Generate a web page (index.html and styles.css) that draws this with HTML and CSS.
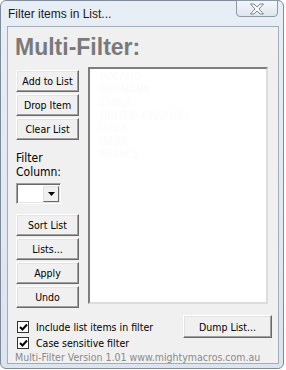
FILE: index.html
```html
<!DOCTYPE html>
<html lang="en">
<head>
  <meta charset="UTF-8">
  <title>Filter items in List...</title>
  <link rel="stylesheet" href="styles.css">
</head>
<body>

<!-- Dialog window -->
<div class="window">
  <div class="titlebar">
    <span class="title">Filter items in List...</span>
    <button class="close">
      <svg width="16" height="12" viewBox="0 0 16 12"><path d="M1.5 1h3.5l3 3 3-3h3.5L10 6l4.5 5H11L8 8l-3 3H1.5L6 6z" fill="#fff" stroke="#7c8594" stroke-width="1" stroke-linejoin="round"/></svg>
    </button>
  </div>

  <div class="client">
    <h1>Multi-Filter:</h1>

    <div class="main">
      <div class="side">
        <button class="btn">Add to List</button>
        <button class="btn">Drop Item</button>
        <button class="btn">Clear List</button>
        <div class="label">Filter<br>Column:</div>
        <div class="combo">
          <span class="combo-field"></span>
          <span class="combo-arrow"><svg width="7" height="4" viewBox="0 0 7 4"><path d="M0 0h7L3.5 4z" fill="#000"/></svg></span>
        </div>
        <button class="btn first">Sort List</button>
        <button class="btn">Lists...</button>
        <button class="btn">Apply</button>
        <button class="btn">Undo</button>
      </div>
      <ul class="listbox">
        <li>POLAND</li>
        <li>GERMANY</li>
        <li>CHINA</li>
        <li>UNITED KINGDOM</li>
        <li>U.S.A</li>
        <li>INDIA</li>
        <li>FRANCE</li>
      </ul>
    </div>

    <div class="bottom">
      <div class="checks">
        <label class="check"><span class="box"><svg width="9" height="9" viewBox="0 0 9 9"><path d="M1 4l2.5 2.5L8 1.5" fill="none" stroke="#000" stroke-width="2"/></svg></span>Include list items in filter</label>
        <label class="check"><span class="box"><svg width="9" height="9" viewBox="0 0 9 9"><path d="M1 4l2.5 2.5L8 1.5" fill="none" stroke="#000" stroke-width="2"/></svg></span>Case sensitive filter</label>
      </div>
      <button class="btn dump">Dump List...</button>
    </div>

    <div class="version">Multi-Filter Version 1.01 www.mightymacros.com.au</div>
  </div>
</div>

</body>
</html>
```

FILE: styles.css
```css
* {
  box-sizing: border-box;
}
body {
  margin: 0;
  background-color: #fff;
  font-family: "DejaVu Sans Condensed", "Liberation Sans", sans-serif;
  font-size: 10.5px;
  color: #000;
}

.window {
  width: 284px;
  height: 369px;
  border: 1px solid #7f8b9a;
  border-radius: 6px;
  background: linear-gradient(#e8eef6, #dbe4ef);
}

.titlebar {
  height: 25px;
  display: flex;
  justify-content: space-between;
  align-items: flex-start;
}
.title {
  font-family: "Liberation Sans", sans-serif;
  font-size: 12px;
  margin: 6px 0 0 7px;
  color: #1a1a1a;
}
.close {
  width: 42px;
  height: 17px;
  margin: -1px 5px 0 0;
  padding: 0;
  border: 1px solid #8d99a8;
  border-radius: 0 0 4px 4px;
  background: linear-gradient(#f4f7fa, #dfe6ee);
  display: flex;
  align-items: center;
  justify-content: center;
}

.client {
  margin-left: 6px;
  width: 272px;
  height: 338px;
  border: 1px solid #a3adb9;
  background-color: #f0f0f0;
  padding: 7px 0 0 8px;
}

h1 {
  margin: 0 0 7px -1px;
  font-family: "Liberation Sans", sans-serif;
  font-size: 23px;
  line-height: 26px;
  color: #7a7a7a;
}

.main {
  display: flex;
  align-items: flex-start;
  gap: 9px;
}
.side {
  width: 63px;
  padding-top: 3px;
  display: flex;
  flex-direction: column;
}

.btn {
  height: 22px;
  margin: 0 0 2px;
  padding: 0;
  font-family: inherit;
  font-size: 10.5px;
  color: #000;
  background-color: #f0f0f0;
  border: 1px solid;
  border-color: #fff #696969 #696969 #fff;
  box-shadow: inset -1px -1px 0 #a0a0a0, inset 1px 1px 0 #e3e3e3;
}
.btn:last-child {
  margin-bottom: 0;
}
.btn.first {
  margin-top: 10px;
}

.label {
  margin-top: 9px;
  line-height: 14px;
  font-size: 12px;
}
.combo {
  display: flex;
  width: 45px;
  height: 21px;
  margin-top: 4px;
  background-color: #fff;
  border: 1px solid;
  border-color: #a0a0a0 #fff #fff #a0a0a0;
  box-shadow: inset 1px 1px 0 #696969, inset -1px -1px 0 #e3e3e3;
}
.combo-field {
  flex: 1;
}
.combo-arrow {
  width: 16px;
  margin: 2px 1px 1px 0;
  display: flex;
  align-items: center;
  justify-content: center;
  background-color: #f0f0f0;
  border: 1px solid;
  border-color: #e3e3e3 #696969 #696969 #e3e3e3;
}

.listbox {
  width: 180px;
  height: 237px;
  margin: 0;
  padding: 1px 0 0 10px;
  list-style: none;
  background-color: #fff;
  border: 2px solid;
  border-color: #7d7d7d #dcdcdc #dcdcdc #7d7d7d;
  line-height: 13px;
  font-size: 11px;
  color: #fbfbfb;
}

.bottom {
  display: flex;
  justify-content: space-between;
  align-items: flex-start;
  margin-top: 7px;
  padding-right: 6px;
}
.checks {
  margin-top: 4px;
  padding-left: 1px;
}
.check {
  display: flex;
  align-items: center;
  height: 16px;
}
.box {
  width: 12px;
  height: 12px;
  margin-right: 7px;
  background-color: #fff;
  border: 1px solid #333;
  display: flex;
  align-items: center;
  justify-content: center;
}
.dump {
  width: 89px;
  height: 23px;
  margin: 0;
}

.version {
  margin-left: -1px;
  line-height: 12px;
  color: #8a8a8a;
}
```
